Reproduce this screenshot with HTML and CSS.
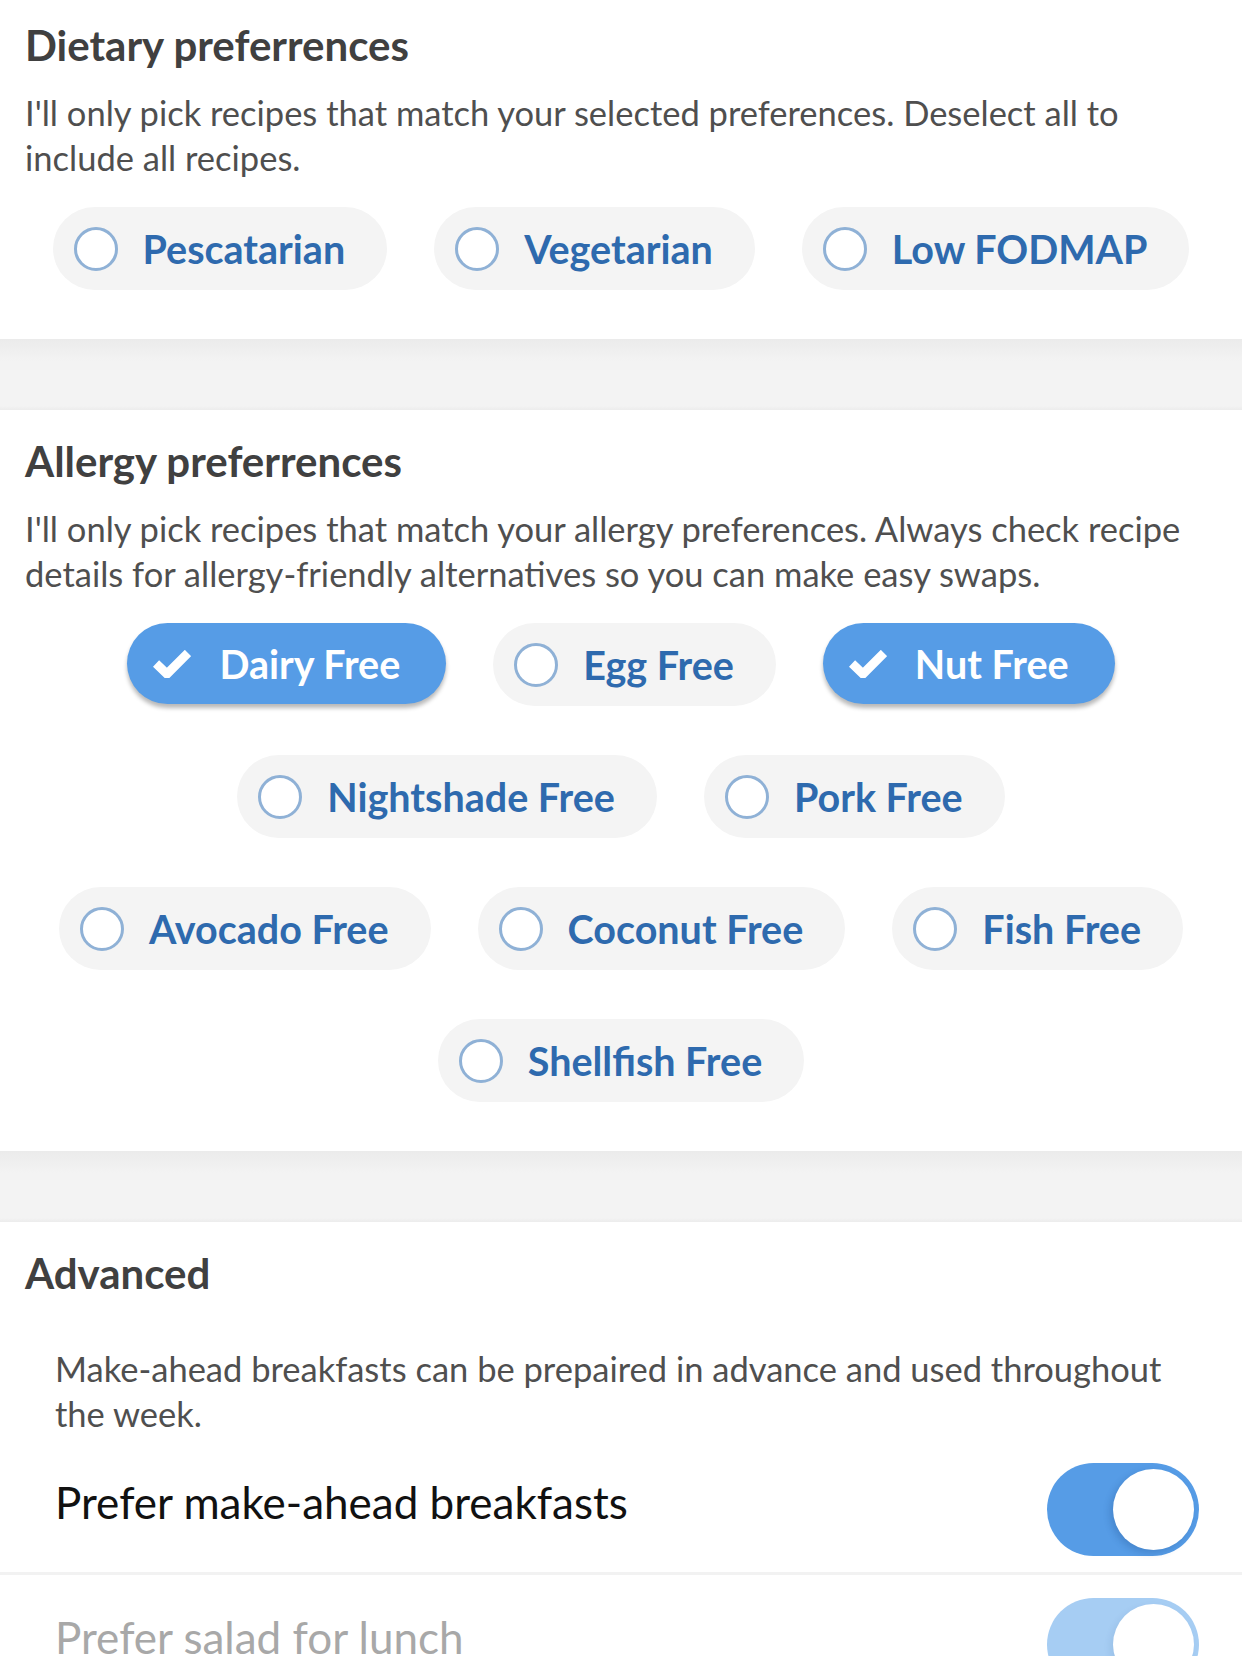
FILE: index.html
```html
<!DOCTYPE html>
<html lang="en">
<head>
<meta charset="utf-8">
<title>Preferences</title>
<link rel="stylesheet" href="styles.css">
</head>
<body>
<main class="page">
  <section class="section section-first">
    <h2 class="title">Dietary preferrences</h2>
    <p class="desc">I'll only pick recipes that match your selected preferences. Deselect all to include all recipes.</p>
    <div class="pills">
      <div class="pill-row">
        <button class="pill"><span class="radio"></span><span class="label">Pescatarian</span></button>
        <button class="pill"><span class="radio"></span><span class="label">Vegetarian</span></button>
        <button class="pill"><span class="radio"></span><span class="label">Low FODMAP</span></button>
      </div>
    </div>
  </section>

  <div class="band"></div>

  <section class="section">
    <h2 class="title">Allergy preferrences</h2>
    <p class="desc">I'll only pick recipes that match your allergy preferences. Always check recipe details for allergy-friendly alternatives so you can make easy swaps.</p>
    <div class="pills">
      <div class="pill-row">
        <button class="pill on"><svg class="check" viewBox="0 0 38 28" width="38" height="28"><polyline points="3,13.5 14,24 35,3" fill="none" stroke="#fff" stroke-width="9" stroke-linejoin="miter"/></svg><span class="label">Dairy Free</span></button>
        <button class="pill"><span class="radio"></span><span class="label">Egg Free</span></button>
        <button class="pill on"><svg class="check" viewBox="0 0 38 28" width="38" height="28"><polyline points="3,13.5 14,24 35,3" fill="none" stroke="#fff" stroke-width="9" stroke-linejoin="miter"/></svg><span class="label">Nut Free</span></button>
      </div>
      <div class="pill-row">
        <button class="pill"><span class="radio"></span><span class="label">Nightshade Free</span></button>
        <button class="pill"><span class="radio"></span><span class="label">Pork Free</span></button>
      </div>
      <div class="pill-row">
        <button class="pill"><span class="radio"></span><span class="label">Avocado Free</span></button>
        <button class="pill"><span class="radio"></span><span class="label">Coconut Free</span></button>
        <button class="pill"><span class="radio"></span><span class="label">Fish Free</span></button>
      </div>
      <div class="pill-row">
        <button class="pill"><span class="radio"></span><span class="label">Shellfish Free</span></button>
      </div>
    </div>
  </section>

  <div class="band"></div>

  <section class="section section-advanced">
    <h2 class="title">Advanced</h2>
    <div class="options">
      <p class="desc desc-indent">Make-ahead breakfasts can be prepaired in advance and used throughout the week.</p>
      <div class="option">
        <span class="option-label">Prefer make-ahead breakfasts</span>
        <span class="toggle"><span class="knob"></span></span>
      </div>
      <div class="option option-disabled">
        <span class="option-label">Prefer salad for lunch</span>
        <span class="toggle"><span class="knob"></span></span>
      </div>
    </div>
  </section>
</main>
</body>
</html>
```
FILE: styles.css
```css
html, body {
  margin: 0;
  padding: 0;
  background: #ffffff;
}

body {
  font-family: "Lato", "Open Sans", sans-serif;
  color: #444444;
  overflow-x: hidden;
}

.page {
  display: flex;
  flex-direction: column;
}

.section {
  padding: 28px 25px 49px;
  background: #ffffff;
}

.section-first {
  padding-top: 22px;
}

.section-advanced {
  padding-left: 0;
  padding-right: 0;
  padding-bottom: 0;
}

.section-advanced .title {
  padding-left: 25px;
}

.title {
  margin: 0;
  font-weight: 700;
  font-size: 42px;
  line-height: 46px;
  color: #404040;
}

.desc {
  margin: 22px 0 0;
  font-weight: 400;
  font-size: 34.5px;
  line-height: 45px;
  color: #4f4f4f;
}

.pills {
  margin-top: 27px;
  display: flex;
  flex-direction: column;
  gap: 49px;
  margin-left: -25px;
  margin-right: -25px;
}

.pill-row {
  display: flex;
  justify-content: center;
  gap: 47px;
}

.pill {
  display: flex;
  align-items: center;
  height: 83px;
  padding: 0 42px 0 21px;
  border: none;
  border-radius: 42px;
  background: #f4f4f4;
  font-family: inherit;
  cursor: pointer;
}

.radio {
  width: 44px;
  height: 44px;
  box-sizing: border-box;
  border: 3px solid #8fb1d6;
  border-radius: 50%;
  background: #ffffff;
  flex: none;
}

.label {
  margin-left: 25px;
  font-weight: 700;
  font-size: 39.5px;
  line-height: 44px;
  color: #2e6aae;
  white-space: nowrap;
}

.pill.on {
  height: 81px;
  padding: 0 46px 0 26px;
  background: #569ce6;
  box-shadow: 0 4px 4px rgba(0, 0, 0, 0.28);
}

.pill.on .label {
  color: #ffffff;
  margin-left: 28px;
}

.check {
  flex: none;
  display: block;
}

.band {
  height: 71px;
  background: linear-gradient(#ebebeb, #f3f3f3 22px, #f3f3f3 calc(100% - 4px), #ececec);
}

.options {
  display: flex;
  flex-direction: column;
}

.desc-indent {
  margin: 50px 43px 4px 55px;
}

.option {
  display: flex;
  align-items: center;
  justify-content: space-between;
  padding: 23px 43px 16px 55px;
  border-bottom: 3px solid #f2f2f2;
}

.option-label {
  font-size: 44px;
  line-height: 52px;
  color: #111111;
  margin-bottom: 16px;
}

.toggle {
  position: relative;
  width: 152px;
  height: 93px;
  border-radius: 47px;
  background: #569ce6;
  flex: none;
}

.knob {
  position: absolute;
  top: 6px;
  right: 5px;
  width: 81px;
  height: 81px;
  border-radius: 50%;
  background: #ffffff;
  box-shadow: -3px 3px 7px rgba(20, 60, 120, 0.22);
}

.option-disabled .option-label {
  color: #a8a8a8;
}

.option-disabled .toggle {
  background: #a6cdf3;
}

.option-disabled .knob {
  box-shadow: -3px 3px 7px rgba(20, 60, 120, 0.08);
}
```
